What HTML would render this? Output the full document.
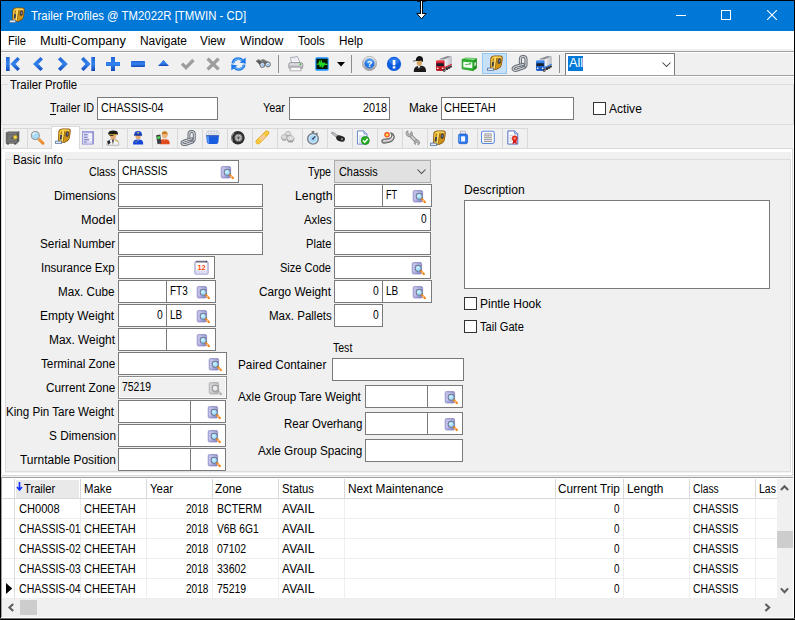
<!DOCTYPE html>
<html lang="en"><head><meta charset="utf-8"><title>Trailer Profiles @ TM2022R [TMWIN - CD]</title>
<style>
html,body{margin:0;padding:0;}
body{width:795px;height:620px;overflow:hidden;background:#f0f0f0;position:relative;font:12px/14px 'Liberation Sans', sans-serif;}
#w div,#w span,#w svg{position:absolute;}
#w span{white-space:pre;line-height:14px;transform-origin:0 0;}
#w{position:absolute;left:0;top:0;width:795px;height:620px;overflow:hidden;}
</style></head>
<body><div id="w">
<div style="left:0px;top:0px;width:795px;height:620px;background:#000;"></div>
<div style="left:1px;top:1px;width:793px;height:30px;background:#0078d7;"></div>
<div style="left:1px;top:31px;width:793px;height:18px;background:#fff;"></div>
<div style="left:1px;top:49px;width:793px;height:569px;background:#f0f0f0;"></div>
<div style="left:793px;top:49px;width:1px;height:428px;background:#f9f9f9;"></div>
<div style="left:1px;top:51px;width:793px;height:1px;background:#a0a0a0;"></div>
<div style="left:1px;top:52px;width:793px;height:1px;background:#fff;"></div>
<div style="left:1px;top:75px;width:793px;height:1px;background:#a0a0a0;"></div>
<div style="left:1px;top:76px;width:793px;height:1px;background:#fff;"></div>
<svg style="left:676px;top:10px" width="10" height="10" viewBox="0 0 10 10"><path d="M0 5.5H10" stroke="#fff" stroke-width="1" fill="none"/></svg>
<svg style="left:721px;top:10px" width="10" height="10" viewBox="0 0 10 10"><rect x=".5" y=".5" width="9" height="9" stroke="#fff" stroke-width="1" fill="none"/></svg>
<svg style="left:767px;top:10px" width="10" height="10" viewBox="0 0 10 10"><path d="M0 0L10 10M10 0L0 10" stroke="#fff" stroke-width="1.1" fill="none"/></svg>
<svg style="left:9px;top:7px" width="16" height="16" viewBox="0 0 16 16"><path d="M3.4 3.2Q4.4 0.4 7.4 0.4H13.4Q16 0.5 15.7 3.6L14.9 9.6Q14.4 12.2 12.4 13.2L9.6 14.7H5Q3 14.5 3.1 12.2Z" fill="#7e4e08"/><path d="M4.1 3.5Q4.9 1.1 7.6 1.1H13.2Q15.3 1.2 15.1 3.6L14.3 9.4Q13.9 11.6 12.1 12.6L9.4 14H5.2Q3.7 13.8 3.8 12Z" fill="#cf9418"/><path d="M4.3 3.9Q5.1 1.7 7.4 1.7H10.6Q9.2 2.4 8.9 5L7.9 13.4H5.2Q4.2 13.2 4.3 12Z" fill="#f3c83e"/><path d="M5 2.6Q5.8 1.7 7.4 1.7H13Q14.6 1.8 14.5 3.2Q12 2.4 5 2.6Z" fill="#f9de78"/><path d="M7.8 3.4L8.9 3.2L7.9 12.8L6.9 13Z" fill="#ffe680"/><path d="M9.2 3.4L9.8 3.3L8.8 13L8.2 13.2Z" fill="#8a5a10"/><path d="M5.3 6.8H7L6.5 11.4H4.8Z" fill="#2c3356"/><path d="M5.9 3.6H6.9L6.7 6H5.7Z" fill="#9a6a10"/><ellipse cx="12.3" cy="6.2" rx="1.5" ry="2.7" transform="rotate(8 12.3 6.2)" fill="#3c3e55" stroke="#6a5420" stroke-width=".6"/><ellipse cx="12.5" cy="6" rx=".6" ry="1.3" transform="rotate(8 12.5 6)" fill="#7a7e96"/><path d="M0.5 13.1H6.6V15.6H0.5Z" fill="#dfe8f4" stroke="#4e6c9c" stroke-width=".8"/></svg>
<svg style="left:416px;top:0px" width="11" height="20" viewBox="0 0 11 20"><rect x="1" y="0" width="9" height="1.7" fill="#000"/><rect x="4" y="0" width="3" height="14.5" fill="#000"/><path d="M0.8 13.4H10.2L5.5 18.8Z" fill="#fff" stroke="#000" stroke-width="1" stroke-linejoin="miter"/><rect x="5" y="1" width="1" height="14" fill="#fff"/></svg>
<svg style="left:0;top:0" width="0" height="0"><defs><linearGradient id="bg1" x1="0" y1="0" x2="0" y2="1"><stop offset="0" stop-color="#1f62d6"/><stop offset=".5" stop-color="#3484ee"/><stop offset="1" stop-color="#1248b8"/></linearGradient></defs></svg>
<svg style="left:6px;top:57px" width="14" height="14" viewBox="0 0 14 14"><rect x="0" y="0" width="3.7" height="14" fill="url(#bg1)"/><path d="M4.4 7L11.4 0L14 2.3L9.6 7L14 11.7L11.4 14Z" fill="url(#bg1)"/></svg>
<svg style="left:32px;top:57px" width="12" height="14" viewBox="0 0 12 14"><path d="M1 7L8.45 0L11 2.3L6.5 7L11 11.7L8.45 14Z" fill="url(#bg1)"/></svg>
<svg style="left:57px;top:57px" width="12" height="14" viewBox="0 0 12 14"><path d="M10.8 7L3.5 0L0.9 2.3L5.4 7L0.9 11.7L3.5 14Z" fill="url(#bg1)"/></svg>
<svg style="left:81px;top:57px" width="14" height="14" viewBox="0 0 14 14"><rect x="10.3" y="0" width="3.7" height="14" fill="url(#bg1)"/><path d="M9.6 7L2.6 0L0 2.3L4.4 7L0 11.7L2.6 14Z" fill="url(#bg1)"/></svg>
<svg style="left:106px;top:57px" width="14" height="14" viewBox="0 0 14 14"><path d="M5 0H9V5H14V9H9V14H5V9H0V5H5Z" fill="url(#bg1)"/></svg>
<svg style="left:131px;top:61px" width="14" height="6" viewBox="0 0 14 6"><rect x="0" y="0" width="14" height="6" rx=".8" fill="url(#bg1)"/></svg>
<svg style="left:157.7px;top:60px" width="12" height="6" viewBox="0 0 12 6"><path d="M0 6L5.5 0L11 6Z" fill="url(#bg1)"/></svg>
<svg style="left:180px;top:58px" width="16" height="12" viewBox="0 0 16 12"><path d="M2 5.6L6 9.6L13.4 2" stroke="#9d9d9d" stroke-width="3.3" fill="none"/></svg>
<svg style="left:206px;top:57px" width="15" height="14" viewBox="0 0 15 14"><path d="M1.6 1.6L12.6 12.4M12.6 1.6L1.6 12.4" stroke="#9d9d9d" stroke-width="3.4" fill="none"/></svg>
<svg style="left:231px;top:57px" width="15" height="14" viewBox="0 0 15 14"><path d="M1.8 6.4A5.6 5.6 0 0 1 11.4 3.4" stroke="#1f7ae8" stroke-width="2.8" fill="none"/><path d="M8.6 5.6L14.8 6.8L14.6 0.4Z" fill="#1f7ae8"/><path d="M13.2 7.6A5.6 5.6 0 0 1 3.6 10.6" stroke="#1f7ae8" stroke-width="2.8" fill="none"/><path d="M6.4 8.4L0.2 7.2L0.4 13.6Z" fill="#1f7ae8"/><path d="M2.4 5.8A5 5 0 0 1 11 3.6M12.6 8.2A5 5 0 0 1 4 10.4" stroke="#7cc0ff" stroke-width="1" fill="none"/></svg>
<svg style="left:255px;top:58px" width="16" height="11" viewBox="0 0 16 11"><path d="M0.8 3L3.4 1.2L8.6 4.6L6 8Z" fill="#5a5a5a"/><path d="M5.4 2.2L8.2 1L14.2 4.4L11.6 7.6Z" fill="#6c6c6c"/><path d="M2 2.6L4 1.6L8 4" stroke="#9a9a9a" stroke-width=".8" fill="none"/><path d="M6.6 2L8.4 1.4L13.4 4" stroke="#aaa" stroke-width=".8" fill="none"/><ellipse cx="7.4" cy="6.9" rx="2.5" ry="2.5" fill="#cfe4fa" stroke="#5a5a5a" stroke-width=".9"/><ellipse cx="13" cy="6.4" rx="2.4" ry="2.5" fill="#d8ebfc" stroke="#5a5a5a" stroke-width=".9"/><circle cx="7.6" cy="7.2" r="1" fill="#8ab8ea"/><circle cx="13.2" cy="6.7" r="1" fill="#8ab8ea"/></svg>
<div style="left:278px;top:55px;width:1px;height:18px;background:#8d8d8d;"></div>
<svg style="left:288px;top:56px" width="16" height="16" viewBox="0 0 16 16"><path d="M3.6 7L2.6 1.6L9.4 0.6L12 6.6Z" fill="#fff" stroke="#8a92a6" stroke-width=".8"/><path d="M4.4 2.8L8.6 2.2M4.8 4.4L9.6 3.8" stroke="#c8d0e0" stroke-width=".7"/><path d="M0.8 8.4Q0.8 6.6 2.6 6.6H12.8Q14.8 6.6 14.8 8.4V11.2Q14.8 12.8 13 12.8H2.6Q0.8 12.8 0.8 11.2Z" fill="#dcdce0" stroke="#86868c" stroke-width=".8"/><path d="M1.4 9.6H14.2V11.6Q14.2 12.4 13 12.4H2.6Q1.4 12.4 1.4 11.6Z" fill="#b4b4ba"/><path d="M2.8 11.2H12.2L13.4 14.8H1.8Z" fill="#f8f8f8" stroke="#9a9aa0" stroke-width=".7"/><circle cx="12.4" cy="8.2" r=".9" fill="#2cc02c"/></svg>
<svg style="left:315px;top:57px" width="14" height="14" viewBox="0 0 14 14"><rect x=".3" y=".3" width="13.4" height="13.4" rx="1.6" fill="#1e90ff"/><rect x="1.4" y="1.8" width="11.2" height="10.2" fill="#021a02"/><path d="M1.6 7.2H3.6L4.4 5L5.2 9.8L6.2 3.2L7.2 10.6L8 5.4L8.8 8.4L9.6 6.4L10.4 7.4H12.4" stroke="#2ae02a" stroke-width="1.1" fill="none"/></svg>
<svg style="left:337px;top:62px" width="8" height="5" viewBox="0 0 8 5"><path d="M0 0H8L4 4.5Z" fill="#000"/></svg>
<div style="left:351px;top:55px;width:1px;height:18px;background:#8d8d8d;"></div>
<svg style="left:362px;top:56px" width="15" height="15" viewBox="0 0 15 15"><defs><linearGradient id="hg" x1="0" y1="0" x2="0" y2="1"><stop offset="0" stop-color="#f2f2f2"/><stop offset="1" stop-color="#9c9ca0"/></linearGradient></defs><circle cx="7.5" cy="7.5" r="7.1" fill="url(#hg)" stroke="#8e9096" stroke-width=".6"/><circle cx="7.5" cy="7.5" r="5" fill="#2576e2"/><ellipse cx="7.5" cy="5.4" rx="3.8" ry="2.4" fill="#62a8f6" opacity=".75"/><text x="7.5" y="10.6" font-family="Liberation Sans, sans-serif" font-weight="bold" font-size="8.5" text-anchor="middle" fill="#fff">?</text></svg>
<svg style="left:386px;top:56px" width="16" height="16" viewBox="0 0 16 16"><circle cx="8" cy="7.9" r="7.1" fill="#0c5ce0"/><ellipse cx="8" cy="5" rx="5.4" ry="3.3" fill="#3a86f0" opacity=".7"/><rect x="6.7" y="4" width="2.7" height="5.3" rx=".6" fill="#fff"/><rect x="6.7" y="10.3" width="2.7" height="2.2" rx=".5" fill="#fff"/></svg>
<svg style="left:412px;top:55px" width="16" height="17" viewBox="0 0 16 17"><path d="M1.8 17Q1.4 12.4 5 11.2L7.6 10.4L10.8 11Q14.4 12.2 14 17Z" fill="#1a1a1a"/><path d="M5.2 13Q7 11.6 10 12.4" stroke="#555" stroke-width=".7" fill="none"/><path d="M5.6 10.8L7 13.8L8.4 10.6Z" fill="#ececec"/><ellipse cx="7.3" cy="7.8" rx="2.6" ry="3" fill="#d6a564"/><path d="M3.8 5.6Q4 1 7.8 1Q11.6 1.2 11 6.4L10 7L9.6 5.8L4.2 5.9L1.3 6.6L1 5.7Z" fill="#141414"/></svg>
<svg style="left:435px;top:55px" width="17" height="17" viewBox="0 0 17 17"><defs><linearGradient id="tgdc222c" x1="0" y1="0" x2="1" y2="0"><stop offset="0" stop-color="#f4f4f8"/><stop offset="1" stop-color="#b8bac2"/></linearGradient></defs><path d="M4.6 3.8L12.4 1L16.8 1.4L9.8 4.6Z" fill="#8d9098"/><path d="M4.6 3.8L9.8 4.6V6.2L4.6 5.6Z" fill="#b9bdc6"/><path d="M9.8 4.6L16.8 1.4V9.9L9.8 13Z" fill="url(#tgdc222c)"/><path d="M9.8 11.8L16.8 8.7V9.9L9.8 13Z" fill="#dc222c"/><circle cx="11.8" cy="13.6" r="1.5" fill="#2c2c2c"/><circle cx="14" cy="12.6" r="1.3" fill="#2c2c2c"/><circle cx="15.9" cy="11.6" r="1.1" fill="#2c2c2c"/><path d="M1 7Q1 5.4 2.4 5.2H8.2L9.6 6.4V14.6L8.6 15.8H2L1 14.8Z" fill="#dc222c"/><path d="M1.8 5.8H8.2" stroke="#f4767c" stroke-width="1"/><path d="M1.5 8.2H8.7L8.9 10.9H1.3Z" fill="#18202e"/><path d="M1 11.4H9.6V14.6L8.6 15.8H2L1 14.8Z" fill="#b8141e"/><ellipse cx="2.7" cy="13.2" rx="1" ry=".8" fill="#fff"/><ellipse cx="7.7" cy="13.2" rx="1" ry=".8" fill="#fff"/><circle cx="9.2" cy="15.4" r="1.4" fill="#2c2c2c"/><circle cx="9.2" cy="15.4" r=".6" fill="#aaa"/></svg>
<svg style="left:460.6px;top:57px" width="16.8" height="14.6" viewBox="0 0 18 16"><path d="M1 2.8L5 1L17.2 1.8L13.4 3.8Z" fill="#92ea92" stroke="#1e961e" stroke-width=".6"/><path d="M13.4 3.8L17.2 1.8V12.4L13.4 15Z" fill="#1e8e1e"/><path d="M1 2.8L13.4 3.8V15L1 13Z" fill="#2eb42e" stroke="#168a16" stroke-width=".7"/><path d="M2.3 5.2L12.2 6V12.4L2.3 11.2Z" fill="#f2faf2"/><path d="M4.4 8.4L10.8 7.6M10.8 7.6L8.6 6.8" stroke="#3aa83a" stroke-width=".9" fill="none"/><path d="M14.4 6.4L16.2 5.4V9L14.4 10.2Z" fill="#d6eed6"/></svg>
<div style="left:482px;top:53px;width:25px;height:21px;background:#c6e0f7;border:1px solid #92c8f5;box-sizing:border-box;"></div>
<svg style="left:486.5px;top:55.2px" width="16" height="16" viewBox="0 0 16 16"><path d="M3.4 3.2Q4.4 0.4 7.4 0.4H13.4Q16 0.5 15.7 3.6L14.9 9.6Q14.4 12.2 12.4 13.2L9.6 14.7H5Q3 14.5 3.1 12.2Z" fill="#7e4e08"/><path d="M4.1 3.5Q4.9 1.1 7.6 1.1H13.2Q15.3 1.2 15.1 3.6L14.3 9.4Q13.9 11.6 12.1 12.6L9.4 14H5.2Q3.7 13.8 3.8 12Z" fill="#cf9418"/><path d="M4.3 3.9Q5.1 1.7 7.4 1.7H10.6Q9.2 2.4 8.9 5L7.9 13.4H5.2Q4.2 13.2 4.3 12Z" fill="#f3c83e"/><path d="M5 2.6Q5.8 1.7 7.4 1.7H13Q14.6 1.8 14.5 3.2Q12 2.4 5 2.6Z" fill="#f9de78"/><path d="M7.8 3.4L8.9 3.2L7.9 12.8L6.9 13Z" fill="#ffe680"/><path d="M9.2 3.4L9.8 3.3L8.8 13L8.2 13.2Z" fill="#8a5a10"/><path d="M5.3 6.8H7L6.5 11.4H4.8Z" fill="#2c3356"/><path d="M5.9 3.6H6.9L6.7 6H5.7Z" fill="#9a6a10"/><ellipse cx="12.3" cy="6.2" rx="1.5" ry="2.7" transform="rotate(8 12.3 6.2)" fill="#3c3e55" stroke="#6a5420" stroke-width=".6"/><ellipse cx="12.5" cy="6" rx=".6" ry="1.3" transform="rotate(8 12.5 6)" fill="#7a7e96"/><path d="M0.5 13.1H6.6V15.6H0.5Z" fill="#dfe8f4" stroke="#4e6c9c" stroke-width=".8"/></svg>
<svg style="left:511px;top:55px" width="17" height="17" viewBox="0 0 17 17"><path d="M9.4 10V4.4Q9.4 1.5 12.2 1.5Q15 1.5 15 4.4V9.4Q15 11.8 12.6 12.2" stroke="#666d76" stroke-width="3.1" fill="none" stroke-linecap="round"/><path d="M9.4 10V4.4Q9.4 1.5 12.2 1.5Q15 1.5 15 4.4V9.4Q15 11.8 12.6 12.2" stroke="#d4d9de" stroke-width="1.1" fill="none" stroke-linecap="round"/><path d="M12.4 9.3L5.2 11.2Q1.6 12.4 2.2 14.2Q3 16 6.4 15L13.2 12.6" stroke="#666d76" stroke-width="3.1" fill="none" stroke-linecap="round"/><path d="M12.4 9.3L5.2 11.2Q1.6 12.4 2.2 14.2Q3 16 6.4 15L13.2 12.6" stroke="#d4d9de" stroke-width="1.1" fill="none" stroke-linecap="round"/></svg>
<svg style="left:535px;top:55px" width="17" height="17" viewBox="0 0 17 17"><defs><linearGradient id="tg2a7ae4" x1="0" y1="0" x2="1" y2="0"><stop offset="0" stop-color="#f4f4f8"/><stop offset="1" stop-color="#b8bac2"/></linearGradient></defs><path d="M4.6 3.8L12.4 1L16.8 1.4L9.8 4.6Z" fill="#8d9098"/><path d="M4.6 3.8L9.8 4.6V6.2L4.6 5.6Z" fill="#b9bdc6"/><path d="M9.8 4.6L16.8 1.4V9.9L9.8 13Z" fill="url(#tg2a7ae4)"/><path d="M9.8 11.8L16.8 8.7V9.9L9.8 13Z" fill="#2a7ae4"/><circle cx="11.8" cy="13.6" r="1.5" fill="#2c2c2c"/><circle cx="14" cy="12.6" r="1.3" fill="#2c2c2c"/><circle cx="15.9" cy="11.6" r="1.1" fill="#2c2c2c"/><path d="M1 7Q1 5.4 2.4 5.2H8.2L9.6 6.4V14.6L8.6 15.8H2L1 14.8Z" fill="#2a7ae4"/><path d="M1.8 5.8H8.2" stroke="#7ab4f8" stroke-width="1"/><path d="M1.5 8.2H8.7L8.9 10.9H1.3Z" fill="#18202e"/><path d="M1 11.4H9.6V14.6L8.6 15.8H2L1 14.8Z" fill="#1858c0"/><ellipse cx="2.7" cy="13.2" rx="1" ry=".8" fill="#fff"/><ellipse cx="7.7" cy="13.2" rx="1" ry=".8" fill="#fff"/><circle cx="9.2" cy="15.4" r="1.4" fill="#2c2c2c"/><circle cx="9.2" cy="15.4" r=".6" fill="#aaa"/></svg>
<div style="left:559px;top:55px;width:1px;height:18px;background:#8d8d8d;"></div>
<div style="left:565px;top:53px;width:110px;height:22px;background:#fff;border:1px solid #7a7a7a;box-sizing:border-box;border-bottom:none;"></div>
<div style="left:568px;top:56px;width:15px;height:15px;background:#0078d7;"></div>
<svg style="left:662px;top:62px" width="9" height="6" viewBox="0 0 9 6"><path d="M0.5 0.5L4.5 4.5L8.5 0.5" stroke="#444" stroke-width="1.05" fill="none"/></svg>
<div style="left:1px;top:84px;width:793px;height:41px;border:1px solid #dcdcdc;box-sizing:border-box;"></div>
<div style="left:8px;top:80px;width:72px;height:10px;background:#f0f0f0;"></div>
<div style="left:49.5px;top:113.5px;width:6px;height:1px;background:#000;"></div>
<div style="left:97px;top:97px;width:121px;height:23px;background:#fff;border:1px solid #7a7a7a;box-sizing:border-box;"></div>
<div style="left:289px;top:97px;width:101px;height:23px;background:#fff;border:1px solid #7a7a7a;box-sizing:border-box;"></div>
<div style="left:441px;top:97px;width:133px;height:23px;background:#fff;border:1px solid #7a7a7a;box-sizing:border-box;"></div>
<div style="left:593px;top:102px;width:13px;height:13px;background:#fff;border:1px solid #333;box-sizing:border-box;"></div>
<div style="left:3px;top:128px;width:25px;height:21px;background:#f0f0f0;border:1px solid #d9d9d9;box-sizing:border-box;border-bottom:none;"></div>
<div style="left:27px;top:128px;width:26px;height:21px;background:#f0f0f0;border:1px solid #d9d9d9;box-sizing:border-box;border-bottom:none;"></div>
<div style="left:77px;top:128px;width:26px;height:21px;background:#f0f0f0;border:1px solid #d9d9d9;box-sizing:border-box;border-bottom:none;"></div>
<div style="left:102px;top:128px;width:26px;height:21px;background:#f0f0f0;border:1px solid #d9d9d9;box-sizing:border-box;border-bottom:none;"></div>
<div style="left:127px;top:128px;width:26px;height:21px;background:#f0f0f0;border:1px solid #d9d9d9;box-sizing:border-box;border-bottom:none;"></div>
<div style="left:152px;top:128px;width:26px;height:21px;background:#f0f0f0;border:1px solid #d9d9d9;box-sizing:border-box;border-bottom:none;"></div>
<div style="left:177px;top:128px;width:26px;height:21px;background:#f0f0f0;border:1px solid #d9d9d9;box-sizing:border-box;border-bottom:none;"></div>
<div style="left:202px;top:128px;width:26px;height:21px;background:#f0f0f0;border:1px solid #d9d9d9;box-sizing:border-box;border-bottom:none;"></div>
<div style="left:227px;top:128px;width:26px;height:21px;background:#f0f0f0;border:1px solid #d9d9d9;box-sizing:border-box;border-bottom:none;"></div>
<div style="left:252px;top:128px;width:26px;height:21px;background:#f0f0f0;border:1px solid #d9d9d9;box-sizing:border-box;border-bottom:none;"></div>
<div style="left:277px;top:128px;width:26px;height:21px;background:#f0f0f0;border:1px solid #d9d9d9;box-sizing:border-box;border-bottom:none;"></div>
<div style="left:302px;top:128px;width:26px;height:21px;background:#f0f0f0;border:1px solid #d9d9d9;box-sizing:border-box;border-bottom:none;"></div>
<div style="left:327px;top:128px;width:26px;height:21px;background:#f0f0f0;border:1px solid #d9d9d9;box-sizing:border-box;border-bottom:none;"></div>
<div style="left:352px;top:128px;width:26px;height:21px;background:#f0f0f0;border:1px solid #d9d9d9;box-sizing:border-box;border-bottom:none;"></div>
<div style="left:377px;top:128px;width:26px;height:21px;background:#f0f0f0;border:1px solid #d9d9d9;box-sizing:border-box;border-bottom:none;"></div>
<div style="left:402px;top:128px;width:26px;height:21px;background:#f0f0f0;border:1px solid #d9d9d9;box-sizing:border-box;border-bottom:none;"></div>
<div style="left:427px;top:128px;width:26px;height:21px;background:#f0f0f0;border:1px solid #d9d9d9;box-sizing:border-box;border-bottom:none;"></div>
<div style="left:452px;top:128px;width:26px;height:21px;background:#f0f0f0;border:1px solid #d9d9d9;box-sizing:border-box;border-bottom:none;"></div>
<div style="left:477px;top:128px;width:26px;height:21px;background:#f0f0f0;border:1px solid #d9d9d9;box-sizing:border-box;border-bottom:none;"></div>
<div style="left:502px;top:128px;width:26px;height:21px;background:#f0f0f0;border:1px solid #d9d9d9;box-sizing:border-box;border-bottom:none;"></div>
<div style="left:1px;top:148px;width:792px;height:328px;background:#fff;border:1px solid #d9d9d9;box-sizing:border-box;"></div>
<div style="left:51px;top:126px;width:29px;height:23px;background:#fff;border:1px solid #d9d9d9;box-sizing:border-box;border-bottom:none;"></div>
<svg style="left:5.3px;top:130px" width="16.2" height="16.2" viewBox="0 0 17 17"><path d="M1.2 3L3.8 1H15V11.8L12.6 13.8H1.2Z" fill="#5e5e5e"/><path d="M1.2 3L3.8 1H15L12.6 3Z" fill="#a8a8a8"/><rect x="1.2" y="3" width="11.4" height="10.8" fill="#868686" stroke="#4a4a4a" stroke-width=".7"/><rect x="2.8" y="4.6" width="8.2" height="7.6" fill="#767676" stroke="#5c5c5c" stroke-width=".6"/><circle cx="10.8" cy="7.6" r="2" fill="#f4d648" stroke="#a88a14" stroke-width=".6"/><circle cx="7.6" cy="8.6" r=".9" fill="#4a4a4a"/><path d="M2 13.8V15.2H4.2V13.8M9.6 13.8V15.2H11.8V13.8" fill="#3a3a3a"/></svg>
<svg style="left:30.3px;top:130px" width="16.2" height="16.2" viewBox="0 0 17 17"><path d="M8.8 9.2L13.6 14" stroke="#e8801a" stroke-width="3" stroke-linecap="round"/><path d="M10.2 10.6L13.4 13.8" stroke="#fde0b8" stroke-width="1" stroke-dasharray="1 1"/><path d="M8 8.4L9.4 9.8" stroke="#ddd" stroke-width="2.2"/><circle cx="5.6" cy="5.8" r="4.2" fill="#a9dcf8" stroke="#9a9490" stroke-width="1.1"/><path d="M3 5Q3.8 3 6 2.8" stroke="#fff" stroke-width="1.1" fill="none"/></svg>
<svg style="left:54.5px;top:127.5px" width="16" height="16" viewBox="0 0 16 16"><path d="M3.4 3.2Q4.4 0.4 7.4 0.4H13.4Q16 0.5 15.7 3.6L14.9 9.6Q14.4 12.2 12.4 13.2L9.6 14.7H5Q3 14.5 3.1 12.2Z" fill="#7e4e08"/><path d="M4.1 3.5Q4.9 1.1 7.6 1.1H13.2Q15.3 1.2 15.1 3.6L14.3 9.4Q13.9 11.6 12.1 12.6L9.4 14H5.2Q3.7 13.8 3.8 12Z" fill="#cf9418"/><path d="M4.3 3.9Q5.1 1.7 7.4 1.7H10.6Q9.2 2.4 8.9 5L7.9 13.4H5.2Q4.2 13.2 4.3 12Z" fill="#f3c83e"/><path d="M5 2.6Q5.8 1.7 7.4 1.7H13Q14.6 1.8 14.5 3.2Q12 2.4 5 2.6Z" fill="#f9de78"/><path d="M7.8 3.4L8.9 3.2L7.9 12.8L6.9 13Z" fill="#ffe680"/><path d="M9.2 3.4L9.8 3.3L8.8 13L8.2 13.2Z" fill="#8a5a10"/><path d="M5.3 6.8H7L6.5 11.4H4.8Z" fill="#2c3356"/><path d="M5.9 3.6H6.9L6.7 6H5.7Z" fill="#9a6a10"/><ellipse cx="12.3" cy="6.2" rx="1.5" ry="2.7" transform="rotate(8 12.3 6.2)" fill="#3c3e55" stroke="#6a5420" stroke-width=".6"/><ellipse cx="12.5" cy="6" rx=".6" ry="1.3" transform="rotate(8 12.5 6)" fill="#7a7e96"/><path d="M0.5 13.1H6.6V15.6H0.5Z" fill="#dfe8f4" stroke="#4e6c9c" stroke-width=".8"/></svg>
<svg style="left:80.3px;top:130px" width="16.2" height="16.2" viewBox="0 0 17 17"><rect x="2.6" y="1.6" width="11.4" height="13.2" fill="#dcdcf6" stroke="#8e8ed4" stroke-width=".9"/><path d="M2.6 2.4H14" stroke="#a8a8e0" stroke-width="1.4"/><path d="M4.2 5H8M4.2 7.6H8M4.2 10.2H9.4M4.2 12.6H7" stroke="#6c6cb0" stroke-width="1"/><path d="M9 5H12.6M9 7.6H12.6M10.2 10.2H12.6" stroke="#fff" stroke-width="1.4"/><path d="M13.6 2V14.6" stroke="#7a7ac4" stroke-width=".9"/></svg>
<svg style="left:105.3px;top:130px" width="16.2" height="16.2" viewBox="0 0 17 17"><path d="M2 16Q1.6 11 5 10.2L8.4 9.4L11.8 10.2Q15 11 14.6 16Z" fill="#f4f4f4" stroke="#8e8e8e" stroke-width=".6"/><path d="M7.4 10L8.3 15.4L9.4 10Z" fill="#222"/><path d="M2.2 12.2L4.6 10.6L6 13.4L3.4 15.6Z" fill="#2a2a2a"/><path d="M11 10.4L13.8 11.2L13.4 12.4L10.8 11.6Z" fill="#d8a820"/><ellipse cx="8.5" cy="6.6" rx="3" ry="3.3" fill="#e0aa72"/><path d="M3.4 3.6Q3.6 0.4 8.6 0.4Q13.6 0.4 13.6 3.6L13 5.2H4Z" fill="#1c1c1c"/><path d="M4.4 4.4H12.6V5.4H4.4Z" fill="#d8b030"/><path d="M4.4 5.4H9L8.4 6.4H5Z" fill="#111"/></svg>
<svg style="left:130.3px;top:130px" width="16.2" height="16.2" viewBox="0 0 17 17"><path d="M3.2 15.2Q2.8 11 6 10.2L8.5 9.6L11 10.2Q14.2 11 13.8 15.2Z" fill="#1646d8"/><path d="M7.5 9.8L8.5 12L9.5 9.8Z" fill="#9cc0f4"/><circle cx="6.4" cy="12.4" r=".6" fill="#f0d040"/><ellipse cx="8.5" cy="6.9" rx="2.7" ry="3" fill="#e0aa72"/><path d="M4.6 4.2Q4.6 1 8.5 1Q12.4 1 12.4 4.2L13 5.6H4Z" fill="#1a48d0"/><path d="M4.4 4.8H12.6V5.9H4.4Z" fill="#0c2a80"/><circle cx="8.5" cy="3" r=".9" fill="#f0d040"/></svg>
<svg style="left:155.3px;top:130px" width="16.2" height="16.2" viewBox="0 0 17 17"><path d="M4.6 15Q4.2 10.8 7.4 10L10 9.4L12.6 10Q15.8 10.8 15.4 15Z" fill="#e04a1c"/><path d="M9 9.8L10 11.4L11.2 9.8Z" fill="#f4c8a0"/><ellipse cx="10.2" cy="5.6" rx="2.9" ry="3.3" fill="#ecb67e"/><path d="M7.2 4.8Q7.2 1.2 10.4 1.4Q13.6 1.6 13.2 5.4Q12 3 7.2 4.8Z" fill="#c87a1c"/><path d="M1.2 5.6L5.6 4.6L6.6 14L2.6 15Z" fill="#3e3e46"/><path d="M2.2 7L5 6.4L5.3 9L2.5 9.6Z" fill="#4ee04e"/></svg>
<svg style="left:180.3px;top:130px" width="16.2" height="16.2" viewBox="0 0 17 17"><path d="M9.4 10V4.4Q9.4 1.5 12.2 1.5Q15 1.5 15 4.4V9.4Q15 11.8 12.6 12.2" stroke="#666d76" stroke-width="3.1" fill="none" stroke-linecap="round"/><path d="M9.4 10V4.4Q9.4 1.5 12.2 1.5Q15 1.5 15 4.4V9.4Q15 11.8 12.6 12.2" stroke="#d4d9de" stroke-width="1.1" fill="none" stroke-linecap="round"/><path d="M12.4 9.3L5.2 11.2Q1.6 12.4 2.2 14.2Q3 16 6.4 15L13.2 12.6" stroke="#666d76" stroke-width="3.1" fill="none" stroke-linecap="round"/><path d="M12.4 9.3L5.2 11.2Q1.6 12.4 2.2 14.2Q3 16 6.4 15L13.2 12.6" stroke="#d4d9de" stroke-width="1.1" fill="none" stroke-linecap="round"/></svg>
<svg style="left:205.3px;top:130px" width="16.2" height="16.2" viewBox="0 0 17 17"><path d="M1.3 5.6H14.7L14 12.6Q13.8 14.6 11.8 14.8H4.4Q2.4 14.6 2 12.6Z" fill="#1a5ce0"/><path d="M2 6.4L2.6 12.4Q2.8 14 4.4 14.2L4 6.4Z" fill="#5a9af4"/><path d="M1.4 3.6L3 1.2H13L14.6 3.6V6H1.4Z" fill="#f4f6fa" stroke="#a8b0c0" stroke-width=".6"/><path d="M3.4 1.4V4.2H6.4V1.4M6.4 4.2H9.6V1.4M9.6 4.2H12.6V1.4" stroke="#b4bccc" stroke-width=".7" fill="none"/><path d="M1.4 6H14.6" stroke="#0e3eb0" stroke-width=".9"/></svg>
<svg style="left:230.3px;top:130px" width="16.2" height="16.2" viewBox="0 0 17 17"><circle cx="8.3" cy="8.2" r="7.1" fill="#2c2c2c"/><path d="M2.6 11.4A6.4 6.4 0 0 1 4.4 3.2" stroke="#8a8a8a" stroke-width="1.3" fill="none"/><circle cx="8.9" cy="8.2" r="4.2" fill="#7a7a7a"/><circle cx="8.9" cy="8.2" r="3.3" fill="#d0d0d0"/><path d="M8.9 5V11.4M5.7 8.2H12.1M6.7 6L11.1 10.4M11.1 6L6.7 10.4" stroke="#6a6a6a" stroke-width=".7"/><circle cx="8.9" cy="8.2" r="1" fill="#555"/></svg>
<svg style="left:255.3px;top:130px" width="16.2" height="16.2" viewBox="0 0 17 17"><path d="M3.2 12.4L12.4 3.2" stroke="#e0a018" stroke-width="5" stroke-linecap="round"/><path d="M3.2 12.4L12.4 3.2" stroke="#fad24a" stroke-width="3.6" stroke-linecap="round"/><path d="M5.8 9.8L9.8 5.8" stroke="#f8c8a0" stroke-width="3.6"/><path d="M3.2 12.4L5 10.6M10.6 5L12.4 3.2" stroke="#f0b428" stroke-width="2.6" stroke-dasharray=".6 .7"/></svg>
<svg style="left:280.3px;top:130px" width="16.2" height="16.2" viewBox="0 0 17 17"><path d="M5.4 3.6L7 1.6H10L11.4 3.6L10 5.8H7Z" fill="#dcdcdc" stroke="#9a9a9a" stroke-width=".6"/><path d="M5.4 3.6V5L7 7H10L11.4 5V3.6L10 5.8H7Z" fill="#a4a4a4"/><path d="M1.2 7.4L2.8 5H6L7.6 7.4L6 9.8H2.8Z" fill="#e0e0e0" stroke="#9a9a9a" stroke-width=".6"/><path d="M1.2 7.4V9L2.8 11.4H6L7.6 9V7.4L6 9.8H2.8Z" fill="#a8a8a8"/><circle cx="4.4" cy="7.4" r="1.1" fill="#f6f6f6" stroke="#aaa" stroke-width=".4"/><path d="M7 8.6L9 6H13L15 8.6L13 11.2H9Z" fill="#e2e2e2" stroke="#9a9a9a" stroke-width=".6"/><path d="M7 8.6V10.4L9 13H13L15 10.4V8.6L13 11.2H9Z" fill="#a0a0a0"/><circle cx="11" cy="8.6" r="1.3" fill="#f8f8f8" stroke="#aaa" stroke-width=".4"/></svg>
<svg style="left:305.3px;top:130px" width="16.2" height="16.2" viewBox="0 0 17 17"><rect x="7" y="1" width="2.8" height="2.4" fill="#7a7a7a"/><path d="M11.8 3.2L13.2 4.4" stroke="#666" stroke-width="1.5"/><circle cx="8.4" cy="9.2" r="5.6" fill="#a6d4f6" stroke="#7c8088" stroke-width="1.5"/><circle cx="8.4" cy="9.2" r="4.2" fill="none" stroke="#d8eefc" stroke-width=".8"/><path d="M8.4 9.2L10.8 6.6" stroke="#223" stroke-width="1.1"/><circle cx="8.4" cy="9.2" r=".9" fill="#223"/></svg>
<svg style="left:330.3px;top:130px" width="16.2" height="16.2" viewBox="0 0 17 17"><path d="M1.2 3.2L3 2.2L9 6.4L7.4 8.2Z" fill="#c4c8cc" stroke="#70757a" stroke-width=".7"/><path d="M6.4 7.6Q7.2 5 10 5.6L14.4 7Q16.4 8 15.6 10.4Q14.8 12.8 12 12.4L8.4 11.4Q6 10.4 6.4 7.6Z" fill="#262626"/><circle cx="12.6" cy="9.6" r="1.1" fill="#888"/></svg>
<svg style="left:355.3px;top:130px" width="16.2" height="16.2" viewBox="0 0 17 17"><path d="M2.6 1H9.4L12.6 4.2V14.8H2.6Z" fill="#fff" stroke="#5a78c0" stroke-width=".9"/><path d="M9.4 1V4.2H12.6" fill="#d8e2f6" stroke="#5a78c0" stroke-width=".8"/><path d="M4.2 6.4H10M4.2 8.6H7M4.2 10.8H6M4.2 13H6.4" stroke="#a8b8dc" stroke-width=".9"/><circle cx="10.8" cy="11" r="4.2" fill="#22b222" stroke="#0e7a0e" stroke-width=".7"/><path d="M8.4 11L10.2 12.8L13.4 9.2" stroke="#fff" stroke-width="1.5" fill="none"/></svg>
<svg style="left:380.3px;top:130px" width="16.2" height="16.2" viewBox="0 0 17 17"><path d="M1.8 11.8Q1.6 9.8 4 9.6L8.6 9.2Q11.8 8.8 12.4 6.4Q12.8 4 11 2.8Q14.8 3.2 15 7Q15 11.4 10.2 12.8L4.4 14Q2 14.2 1.8 11.8Z" fill="#a2a2a2" stroke="#4e4e4e" stroke-width=".9"/><path d="M3.4 11.4Q7.6 11.6 10.6 10.4Q13.4 9 13.6 6.4" stroke="#e8e8e8" stroke-width="1.1" fill="none"/><circle cx="7.4" cy="5" r="2.9" fill="#f04a1e"/><circle cx="7.4" cy="5" r="1.7" fill="#ffc23a"/><circle cx="7.4" cy="5" r=".8" fill="#fff27a"/></svg>
<svg style="left:405.3px;top:130px" width="16.2" height="16.2" viewBox="0 0 17 17"><path d="M4.6 4.6L12.2 12.2" stroke="#8e8e8e" stroke-width="3.8"/><path d="M4.6 4.6L12.2 12.2" stroke="#d2d2d2" stroke-width="2"/><path d="M1 3.6Q0.8 1.2 3.2 0.8L3 3L4.6 4.4L6.6 3.6L6.2 1.4Q8.4 2.2 7.8 4.8Q7 7.2 4.2 7Q1.4 6.6 1 3.6Z" fill="#b4b4b4" stroke="#767676" stroke-width=".6"/><path d="M9.8 12.4Q10.2 10 12.6 10.2Q15.2 10.6 15.4 13.2Q15.4 15.2 13.6 15.8L13.8 13.8L12.4 12.8L10.8 13.6L11 15.4Q9.4 14.6 9.8 12.4Z" fill="#b4b4b4" stroke="#767676" stroke-width=".6"/></svg>
<svg style="left:430px;top:130px" width="16" height="16" viewBox="0 0 16 16"><path d="M3.4 3.2Q4.4 0.4 7.4 0.4H13.4Q16 0.5 15.7 3.6L14.9 9.6Q14.4 12.2 12.4 13.2L9.6 14.7H5Q3 14.5 3.1 12.2Z" fill="#7e4e08"/><path d="M4.1 3.5Q4.9 1.1 7.6 1.1H13.2Q15.3 1.2 15.1 3.6L14.3 9.4Q13.9 11.6 12.1 12.6L9.4 14H5.2Q3.7 13.8 3.8 12Z" fill="#cf9418"/><path d="M4.3 3.9Q5.1 1.7 7.4 1.7H10.6Q9.2 2.4 8.9 5L7.9 13.4H5.2Q4.2 13.2 4.3 12Z" fill="#f3c83e"/><path d="M5 2.6Q5.8 1.7 7.4 1.7H13Q14.6 1.8 14.5 3.2Q12 2.4 5 2.6Z" fill="#f9de78"/><path d="M7.8 3.4L8.9 3.2L7.9 12.8L6.9 13Z" fill="#ffe680"/><path d="M9.2 3.4L9.8 3.3L8.8 13L8.2 13.2Z" fill="#8a5a10"/><path d="M5.3 6.8H7L6.5 11.4H4.8Z" fill="#2c3356"/><path d="M5.9 3.6H6.9L6.7 6H5.7Z" fill="#9a6a10"/><ellipse cx="12.3" cy="6.2" rx="1.5" ry="2.7" transform="rotate(8 12.3 6.2)" fill="#3c3e55" stroke="#6a5420" stroke-width=".6"/><ellipse cx="12.5" cy="6" rx=".6" ry="1.3" transform="rotate(8 12.5 6)" fill="#7a7e96"/><path d="M0.5 13.1H6.6V15.6H0.5Z" fill="#dfe8f4" stroke="#4e6c9c" stroke-width=".8"/></svg>
<svg style="left:455.3px;top:130px" width="16.2" height="16.2" viewBox="0 0 17 17"><rect x="6" y="1.2" width="4.8" height="3.2" fill="#ececf2" stroke="#9a9eb0" stroke-width=".6"/><path d="M3.6 6Q3.6 4.2 5.4 4.2H11.4Q13.2 4.2 13.2 6V12.4Q13.2 14.4 11.4 14.4H5.4Q3.6 14.4 3.6 12.4Z" fill="#2a78ee" stroke="#1650c0" stroke-width=".7"/><path d="M4.4 5.8V12.6" stroke="#7ab8fa" stroke-width="1"/><rect x="6.4" y="6.6" width="4.2" height="5.6" rx=".5" fill="#f4f6ff"/></svg>
<svg style="left:480.3px;top:130px" width="16.2" height="16.2" viewBox="0 0 17 17"><rect x="1.6" y="1.4" width="13.4" height="12.8" rx="2" fill="#fff" stroke="#5a88e0" stroke-width="1.1"/><path d="M4 4.2H12.6M4 6.2H12.6M4 8.2H12.6M4 10.2H12.6M4 12.2H12.6" stroke="#666" stroke-width=".8"/></svg>
<svg style="left:505.3px;top:130px" width="16.2" height="16.2" viewBox="0 0 17 17"><path d="M3 1H10.2L13.4 4.2V14.8H3Z" fill="#fff" stroke="#4a68b8" stroke-width="1"/><path d="M10.2 1V4.2H13.4" fill="#d0dcf4" stroke="#4a68b8" stroke-width=".8"/><path d="M4.6 5.6H8.4M4.6 7.6H7M4.6 9.6H7M4.6 11.6H7.4" stroke="#b4b8c4" stroke-width=".8"/><path d="M8.6 10.6L7.8 15L10.2 13.6L12.6 15L11.8 10.6Z" fill="#d81818"/><circle cx="10.2" cy="8.8" r="2.7" fill="#f03020" stroke="#b01010" stroke-width=".6"/><circle cx="10.2" cy="8.8" r="1.1" fill="#ff9a7a"/></svg>
<div style="left:5px;top:152px;width:786px;height:321px;background:#f0f0f0;"></div>
<div style="left:5px;top:159px;width:786px;height:313px;border:1px solid #dcdcdc;box-sizing:border-box;"></div>
<div style="left:12px;top:154px;width:53px;height:12px;background:#f0f0f0;"></div>
<div style="left:118px;top:160px;width:121px;height:23px;background:#fff;border:1px solid #7a7a7a;box-sizing:border-box;"></div>
<svg style="left:220px;top:166px" width="14" height="14" viewBox="0 0 14 14"><defs><linearGradient id="lka" x1="0" y1="0" x2="1" y2="0"><stop offset="0" stop-color="#bcbcec"/><stop offset="1" stop-color="#8282c0"/></linearGradient></defs><rect x="1.2" y=".4" width="9.4" height="11.6" rx="1.5" fill="url(#lka)" stroke="#8080bc" stroke-width=".7"/><path d="M2 2.2H10M2 4.4H4.4M2 6.6H4M2 8.8H4.4" stroke="#e2e2f6" stroke-width=".8" opacity=".8"/><path d="M9.6 8.8L12.8 12" stroke="#f28a1c" stroke-width="2.3" stroke-linecap="round"/><path d="M11 10.2L11.8 11" stroke="#fff" stroke-width="2" opacity=".55"/><circle cx="7.2" cy="6.3" r="3.1" fill="#a6e0fc" stroke="#6a7088" stroke-width="1"/><circle cx="6.6" cy="5.6" r="1.2" fill="#fff" opacity=".5"/></svg>
<div style="left:118px;top:184px;width:145px;height:23px;background:#fff;border:1px solid #7a7a7a;box-sizing:border-box;"></div>
<div style="left:118px;top:208px;width:145px;height:23px;background:#fff;border:1px solid #7a7a7a;box-sizing:border-box;"></div>
<div style="left:118px;top:232px;width:145px;height:23px;background:#fff;border:1px solid #7a7a7a;box-sizing:border-box;"></div>
<div style="left:118px;top:256px;width:97px;height:23px;background:#fff;border:1px solid #7a7a7a;box-sizing:border-box;"></div>
<svg style="left:194px;top:260px" width="15" height="15" viewBox="0 0 15 15"><rect x="1" y="1.6" width="13" height="12.4" rx=".6" fill="#fff" stroke="#8484c8" stroke-width="1"/><rect x="1.6" y="10.4" width="11.8" height="3" fill="#d4d4f0"/><path d="M4 10.4V13.4M6.6 10.4V13.4M9.2 10.4V13.4M11.6 10.4V13.4" stroke="#f2f2fc" stroke-width=".7"/><path d="M3 0.6V2.8M5 0.6V2.8M7 0.6V2.8M9 0.6V2.8M11 0.6V2.8M12.6 0.6V2.8" stroke="#444" stroke-width=".9"/><text x="7.6" y="9.6" font-family="Liberation Sans, sans-serif" font-weight="bold" font-size="7.5" text-anchor="middle" fill="#ff4a10">12</text></svg>
<div style="left:118px;top:280px;width:98px;height:23px;background:#fff;border:1px solid #7a7a7a;box-sizing:border-box;"></div>
<div style="left:166px;top:280px;width:1px;height:23px;background:#7a7a7a;"></div>
<svg style="left:196px;top:286px" width="14" height="14" viewBox="0 0 14 14"><defs><linearGradient id="lka" x1="0" y1="0" x2="1" y2="0"><stop offset="0" stop-color="#bcbcec"/><stop offset="1" stop-color="#8282c0"/></linearGradient></defs><rect x="1.2" y=".4" width="9.4" height="11.6" rx="1.5" fill="url(#lka)" stroke="#8080bc" stroke-width=".7"/><path d="M2 2.2H10M2 4.4H4.4M2 6.6H4M2 8.8H4.4" stroke="#e2e2f6" stroke-width=".8" opacity=".8"/><path d="M9.6 8.8L12.8 12" stroke="#f28a1c" stroke-width="2.3" stroke-linecap="round"/><path d="M11 10.2L11.8 11" stroke="#fff" stroke-width="2" opacity=".55"/><circle cx="7.2" cy="6.3" r="3.1" fill="#a6e0fc" stroke="#6a7088" stroke-width="1"/><circle cx="6.6" cy="5.6" r="1.2" fill="#fff" opacity=".5"/></svg>
<div style="left:118px;top:304px;width:98px;height:23px;background:#fff;border:1px solid #7a7a7a;box-sizing:border-box;"></div>
<div style="left:166px;top:304px;width:1px;height:23px;background:#7a7a7a;"></div>
<svg style="left:196px;top:310px" width="14" height="14" viewBox="0 0 14 14"><defs><linearGradient id="lka" x1="0" y1="0" x2="1" y2="0"><stop offset="0" stop-color="#bcbcec"/><stop offset="1" stop-color="#8282c0"/></linearGradient></defs><rect x="1.2" y=".4" width="9.4" height="11.6" rx="1.5" fill="url(#lka)" stroke="#8080bc" stroke-width=".7"/><path d="M2 2.2H10M2 4.4H4.4M2 6.6H4M2 8.8H4.4" stroke="#e2e2f6" stroke-width=".8" opacity=".8"/><path d="M9.6 8.8L12.8 12" stroke="#f28a1c" stroke-width="2.3" stroke-linecap="round"/><path d="M11 10.2L11.8 11" stroke="#fff" stroke-width="2" opacity=".55"/><circle cx="7.2" cy="6.3" r="3.1" fill="#a6e0fc" stroke="#6a7088" stroke-width="1"/><circle cx="6.6" cy="5.6" r="1.2" fill="#fff" opacity=".5"/></svg>
<div style="left:118px;top:328px;width:98px;height:23px;background:#fff;border:1px solid #7a7a7a;box-sizing:border-box;"></div>
<div style="left:166px;top:328px;width:1px;height:23px;background:#7a7a7a;"></div>
<svg style="left:196px;top:334px" width="14" height="14" viewBox="0 0 14 14"><defs><linearGradient id="lka" x1="0" y1="0" x2="1" y2="0"><stop offset="0" stop-color="#bcbcec"/><stop offset="1" stop-color="#8282c0"/></linearGradient></defs><rect x="1.2" y=".4" width="9.4" height="11.6" rx="1.5" fill="url(#lka)" stroke="#8080bc" stroke-width=".7"/><path d="M2 2.2H10M2 4.4H4.4M2 6.6H4M2 8.8H4.4" stroke="#e2e2f6" stroke-width=".8" opacity=".8"/><path d="M9.6 8.8L12.8 12" stroke="#f28a1c" stroke-width="2.3" stroke-linecap="round"/><path d="M11 10.2L11.8 11" stroke="#fff" stroke-width="2" opacity=".55"/><circle cx="7.2" cy="6.3" r="3.1" fill="#a6e0fc" stroke="#6a7088" stroke-width="1"/><circle cx="6.6" cy="5.6" r="1.2" fill="#fff" opacity=".5"/></svg>
<div style="left:118px;top:352px;width:109px;height:23px;background:#fff;border:1px solid #7a7a7a;box-sizing:border-box;"></div>
<svg style="left:208px;top:358px" width="14" height="14" viewBox="0 0 14 14"><defs><linearGradient id="lka" x1="0" y1="0" x2="1" y2="0"><stop offset="0" stop-color="#bcbcec"/><stop offset="1" stop-color="#8282c0"/></linearGradient></defs><rect x="1.2" y=".4" width="9.4" height="11.6" rx="1.5" fill="url(#lka)" stroke="#8080bc" stroke-width=".7"/><path d="M2 2.2H10M2 4.4H4.4M2 6.6H4M2 8.8H4.4" stroke="#e2e2f6" stroke-width=".8" opacity=".8"/><path d="M9.6 8.8L12.8 12" stroke="#f28a1c" stroke-width="2.3" stroke-linecap="round"/><path d="M11 10.2L11.8 11" stroke="#fff" stroke-width="2" opacity=".55"/><circle cx="7.2" cy="6.3" r="3.1" fill="#a6e0fc" stroke="#6a7088" stroke-width="1"/><circle cx="6.6" cy="5.6" r="1.2" fill="#fff" opacity=".5"/></svg>
<div style="left:118px;top:376px;width:109px;height:23px;background:#f0f0f0;border:1px solid #8c8c8c;box-sizing:border-box;"></div>
<div style="left:119px;top:377px;width:107px;height:21px;border:1px solid #fff;box-sizing:border-box;"></div>
<svg style="left:208px;top:382px" width="14" height="14" viewBox="0 0 14 14"><defs><linearGradient id="lkb" x1="0" y1="0" x2="1" y2="0"><stop offset="0" stop-color="#d0d0d0"/><stop offset="1" stop-color="#aeaeae"/></linearGradient></defs><rect x="1.2" y=".4" width="9.4" height="11.6" rx="1.5" fill="url(#lkb)" stroke="#a6a6a6" stroke-width=".7"/><path d="M2 2.2H10M2 4.4H4.4M2 6.6H4M2 8.8H4.4" stroke="#e2e2f6" stroke-width=".8" opacity=".8"/><path d="M9.6 8.8L12.8 12" stroke="#adadad" stroke-width="2.3" stroke-linecap="round"/><path d="M11 10.2L11.8 11" stroke="#fff" stroke-width="2" opacity=".55"/><circle cx="7.2" cy="6.3" r="3.1" fill="#e6e6e6" stroke="#8e8e8e" stroke-width="1"/><circle cx="6.6" cy="5.6" r="1.2" fill="#fff" opacity=".5"/></svg>
<div style="left:118px;top:400px;width:108px;height:23px;background:#fff;border:1px solid #7a7a7a;box-sizing:border-box;"></div>
<div style="left:190px;top:400px;width:1px;height:23px;background:#7a7a7a;"></div>
<svg style="left:207px;top:406px" width="14" height="14" viewBox="0 0 14 14"><defs><linearGradient id="lka" x1="0" y1="0" x2="1" y2="0"><stop offset="0" stop-color="#bcbcec"/><stop offset="1" stop-color="#8282c0"/></linearGradient></defs><rect x="1.2" y=".4" width="9.4" height="11.6" rx="1.5" fill="url(#lka)" stroke="#8080bc" stroke-width=".7"/><path d="M2 2.2H10M2 4.4H4.4M2 6.6H4M2 8.8H4.4" stroke="#e2e2f6" stroke-width=".8" opacity=".8"/><path d="M9.6 8.8L12.8 12" stroke="#f28a1c" stroke-width="2.3" stroke-linecap="round"/><path d="M11 10.2L11.8 11" stroke="#fff" stroke-width="2" opacity=".55"/><circle cx="7.2" cy="6.3" r="3.1" fill="#a6e0fc" stroke="#6a7088" stroke-width="1"/><circle cx="6.6" cy="5.6" r="1.2" fill="#fff" opacity=".5"/></svg>
<div style="left:118px;top:424px;width:108px;height:23px;background:#fff;border:1px solid #7a7a7a;box-sizing:border-box;"></div>
<div style="left:190px;top:424px;width:1px;height:23px;background:#7a7a7a;"></div>
<svg style="left:207px;top:430px" width="14" height="14" viewBox="0 0 14 14"><defs><linearGradient id="lka" x1="0" y1="0" x2="1" y2="0"><stop offset="0" stop-color="#bcbcec"/><stop offset="1" stop-color="#8282c0"/></linearGradient></defs><rect x="1.2" y=".4" width="9.4" height="11.6" rx="1.5" fill="url(#lka)" stroke="#8080bc" stroke-width=".7"/><path d="M2 2.2H10M2 4.4H4.4M2 6.6H4M2 8.8H4.4" stroke="#e2e2f6" stroke-width=".8" opacity=".8"/><path d="M9.6 8.8L12.8 12" stroke="#f28a1c" stroke-width="2.3" stroke-linecap="round"/><path d="M11 10.2L11.8 11" stroke="#fff" stroke-width="2" opacity=".55"/><circle cx="7.2" cy="6.3" r="3.1" fill="#a6e0fc" stroke="#6a7088" stroke-width="1"/><circle cx="6.6" cy="5.6" r="1.2" fill="#fff" opacity=".5"/></svg>
<div style="left:118px;top:448px;width:108px;height:23px;background:#fff;border:1px solid #7a7a7a;box-sizing:border-box;"></div>
<div style="left:190px;top:448px;width:1px;height:23px;background:#7a7a7a;"></div>
<svg style="left:207px;top:454px" width="14" height="14" viewBox="0 0 14 14"><defs><linearGradient id="lka" x1="0" y1="0" x2="1" y2="0"><stop offset="0" stop-color="#bcbcec"/><stop offset="1" stop-color="#8282c0"/></linearGradient></defs><rect x="1.2" y=".4" width="9.4" height="11.6" rx="1.5" fill="url(#lka)" stroke="#8080bc" stroke-width=".7"/><path d="M2 2.2H10M2 4.4H4.4M2 6.6H4M2 8.8H4.4" stroke="#e2e2f6" stroke-width=".8" opacity=".8"/><path d="M9.6 8.8L12.8 12" stroke="#f28a1c" stroke-width="2.3" stroke-linecap="round"/><path d="M11 10.2L11.8 11" stroke="#fff" stroke-width="2" opacity=".55"/><circle cx="7.2" cy="6.3" r="3.1" fill="#a6e0fc" stroke="#6a7088" stroke-width="1"/><circle cx="6.6" cy="5.6" r="1.2" fill="#fff" opacity=".5"/></svg>
<div style="left:334px;top:160px;width:97px;height:23px;background:#e1e1e1;border:1px solid #adadad;box-sizing:border-box;"></div>
<svg style="left:417px;top:169px" width="9" height="6" viewBox="0 0 9 6"><path d="M0.5 0.5L4.5 4.5L8.5 0.5" stroke="#444" stroke-width="1.05" fill="none"/></svg>
<div style="left:334px;top:184px;width:98px;height:23px;background:#fff;border:1px solid #7a7a7a;box-sizing:border-box;"></div>
<div style="left:382px;top:184px;width:1px;height:23px;background:#7a7a7a;"></div>
<svg style="left:412px;top:190px" width="14" height="14" viewBox="0 0 14 14"><defs><linearGradient id="lka" x1="0" y1="0" x2="1" y2="0"><stop offset="0" stop-color="#bcbcec"/><stop offset="1" stop-color="#8282c0"/></linearGradient></defs><rect x="1.2" y=".4" width="9.4" height="11.6" rx="1.5" fill="url(#lka)" stroke="#8080bc" stroke-width=".7"/><path d="M2 2.2H10M2 4.4H4.4M2 6.6H4M2 8.8H4.4" stroke="#e2e2f6" stroke-width=".8" opacity=".8"/><path d="M9.6 8.8L12.8 12" stroke="#f28a1c" stroke-width="2.3" stroke-linecap="round"/><path d="M11 10.2L11.8 11" stroke="#fff" stroke-width="2" opacity=".55"/><circle cx="7.2" cy="6.3" r="3.1" fill="#a6e0fc" stroke="#6a7088" stroke-width="1"/><circle cx="6.6" cy="5.6" r="1.2" fill="#fff" opacity=".5"/></svg>
<div style="left:334px;top:208px;width:97px;height:23px;background:#fff;border:1px solid #7a7a7a;box-sizing:border-box;"></div>
<div style="left:334px;top:232px;width:97px;height:23px;background:#fff;border:1px solid #7a7a7a;box-sizing:border-box;"></div>
<div style="left:334px;top:256px;width:97px;height:23px;background:#fff;border:1px solid #7a7a7a;box-sizing:border-box;"></div>
<svg style="left:411.3px;top:262px" width="14" height="14" viewBox="0 0 14 14"><defs><linearGradient id="lka" x1="0" y1="0" x2="1" y2="0"><stop offset="0" stop-color="#bcbcec"/><stop offset="1" stop-color="#8282c0"/></linearGradient></defs><rect x="1.2" y=".4" width="9.4" height="11.6" rx="1.5" fill="url(#lka)" stroke="#8080bc" stroke-width=".7"/><path d="M2 2.2H10M2 4.4H4.4M2 6.6H4M2 8.8H4.4" stroke="#e2e2f6" stroke-width=".8" opacity=".8"/><path d="M9.6 8.8L12.8 12" stroke="#f28a1c" stroke-width="2.3" stroke-linecap="round"/><path d="M11 10.2L11.8 11" stroke="#fff" stroke-width="2" opacity=".55"/><circle cx="7.2" cy="6.3" r="3.1" fill="#a6e0fc" stroke="#6a7088" stroke-width="1"/><circle cx="6.6" cy="5.6" r="1.2" fill="#fff" opacity=".5"/></svg>
<div style="left:334px;top:280px;width:98px;height:23px;background:#fff;border:1px solid #7a7a7a;box-sizing:border-box;"></div>
<div style="left:382px;top:280px;width:1px;height:23px;background:#7a7a7a;"></div>
<svg style="left:412px;top:286px" width="14" height="14" viewBox="0 0 14 14"><defs><linearGradient id="lka" x1="0" y1="0" x2="1" y2="0"><stop offset="0" stop-color="#bcbcec"/><stop offset="1" stop-color="#8282c0"/></linearGradient></defs><rect x="1.2" y=".4" width="9.4" height="11.6" rx="1.5" fill="url(#lka)" stroke="#8080bc" stroke-width=".7"/><path d="M2 2.2H10M2 4.4H4.4M2 6.6H4M2 8.8H4.4" stroke="#e2e2f6" stroke-width=".8" opacity=".8"/><path d="M9.6 8.8L12.8 12" stroke="#f28a1c" stroke-width="2.3" stroke-linecap="round"/><path d="M11 10.2L11.8 11" stroke="#fff" stroke-width="2" opacity=".55"/><circle cx="7.2" cy="6.3" r="3.1" fill="#a6e0fc" stroke="#6a7088" stroke-width="1"/><circle cx="6.6" cy="5.6" r="1.2" fill="#fff" opacity=".5"/></svg>
<div style="left:334px;top:304px;width:49px;height:23px;background:#fff;border:1px solid #7a7a7a;box-sizing:border-box;"></div>
<div style="left:332px;top:358px;width:132px;height:23px;background:#fff;border:1px solid #7a7a7a;box-sizing:border-box;"></div>
<div style="left:365px;top:385px;width:98px;height:23px;background:#fff;border:1px solid #7a7a7a;box-sizing:border-box;"></div>
<div style="left:427px;top:385px;width:1px;height:23px;background:#7a7a7a;"></div>
<svg style="left:444px;top:391px" width="14" height="14" viewBox="0 0 14 14"><defs><linearGradient id="lka" x1="0" y1="0" x2="1" y2="0"><stop offset="0" stop-color="#bcbcec"/><stop offset="1" stop-color="#8282c0"/></linearGradient></defs><rect x="1.2" y=".4" width="9.4" height="11.6" rx="1.5" fill="url(#lka)" stroke="#8080bc" stroke-width=".7"/><path d="M2 2.2H10M2 4.4H4.4M2 6.6H4M2 8.8H4.4" stroke="#e2e2f6" stroke-width=".8" opacity=".8"/><path d="M9.6 8.8L12.8 12" stroke="#f28a1c" stroke-width="2.3" stroke-linecap="round"/><path d="M11 10.2L11.8 11" stroke="#fff" stroke-width="2" opacity=".55"/><circle cx="7.2" cy="6.3" r="3.1" fill="#a6e0fc" stroke="#6a7088" stroke-width="1"/><circle cx="6.6" cy="5.6" r="1.2" fill="#fff" opacity=".5"/></svg>
<div style="left:365px;top:412px;width:98px;height:23px;background:#fff;border:1px solid #7a7a7a;box-sizing:border-box;"></div>
<div style="left:427px;top:412px;width:1px;height:23px;background:#7a7a7a;"></div>
<svg style="left:444px;top:418px" width="14" height="14" viewBox="0 0 14 14"><defs><linearGradient id="lka" x1="0" y1="0" x2="1" y2="0"><stop offset="0" stop-color="#bcbcec"/><stop offset="1" stop-color="#8282c0"/></linearGradient></defs><rect x="1.2" y=".4" width="9.4" height="11.6" rx="1.5" fill="url(#lka)" stroke="#8080bc" stroke-width=".7"/><path d="M2 2.2H10M2 4.4H4.4M2 6.6H4M2 8.8H4.4" stroke="#e2e2f6" stroke-width=".8" opacity=".8"/><path d="M9.6 8.8L12.8 12" stroke="#f28a1c" stroke-width="2.3" stroke-linecap="round"/><path d="M11 10.2L11.8 11" stroke="#fff" stroke-width="2" opacity=".55"/><circle cx="7.2" cy="6.3" r="3.1" fill="#a6e0fc" stroke="#6a7088" stroke-width="1"/><circle cx="6.6" cy="5.6" r="1.2" fill="#fff" opacity=".5"/></svg>
<div style="left:365px;top:439px;width:98px;height:23px;background:#fff;border:1px solid #7a7a7a;box-sizing:border-box;"></div>
<div style="left:464px;top:200px;width:306px;height:89px;background:#fff;border:1px solid #7a7a7a;box-sizing:border-box;"></div>
<div style="left:464px;top:297px;width:13px;height:13px;background:#fff;border:1px solid #333;box-sizing:border-box;"></div>
<div style="left:464px;top:320px;width:13px;height:13px;background:#fff;border:1px solid #333;box-sizing:border-box;"></div>
<div style="left:1px;top:477px;width:793px;height:1px;background:#a0a0a0;"></div>
<div style="left:1px;top:477px;width:1px;height:141px;background:#a0a0a0;"></div>
<div style="left:2px;top:478px;width:791px;height:139px;background:#fff;"></div>
<div style="left:793px;top:477px;width:1px;height:141px;background:#fff;"></div>
<div style="left:1px;top:617px;width:793px;height:1px;background:#fff;"></div>
<div style="left:0px;top:618px;width:795px;height:1px;background:#6e6e6e;"></div>
<div style="left:16px;top:480px;width:63px;height:18px;background:#e9e9e9;"></div>
<div style="left:14px;top:479px;width:1px;height:19px;background:#d9d9d9;"></div>
<div style="left:14px;top:498px;width:1px;height:101px;background:#eeeeee;"></div>
<div style="left:80px;top:479px;width:1px;height:19px;background:#d9d9d9;"></div>
<div style="left:80px;top:498px;width:1px;height:101px;background:#eeeeee;"></div>
<div style="left:146px;top:479px;width:1px;height:19px;background:#d9d9d9;"></div>
<div style="left:146px;top:498px;width:1px;height:101px;background:#eeeeee;"></div>
<div style="left:212px;top:479px;width:1px;height:19px;background:#d9d9d9;"></div>
<div style="left:212px;top:498px;width:1px;height:101px;background:#eeeeee;"></div>
<div style="left:278px;top:479px;width:1px;height:19px;background:#d9d9d9;"></div>
<div style="left:278px;top:498px;width:1px;height:101px;background:#eeeeee;"></div>
<div style="left:344px;top:479px;width:1px;height:19px;background:#d9d9d9;"></div>
<div style="left:344px;top:498px;width:1px;height:101px;background:#eeeeee;"></div>
<div style="left:555px;top:479px;width:1px;height:19px;background:#d9d9d9;"></div>
<div style="left:555px;top:498px;width:1px;height:101px;background:#eeeeee;"></div>
<div style="left:623px;top:479px;width:1px;height:19px;background:#d9d9d9;"></div>
<div style="left:623px;top:498px;width:1px;height:101px;background:#eeeeee;"></div>
<div style="left:689px;top:479px;width:1px;height:19px;background:#d9d9d9;"></div>
<div style="left:689px;top:498px;width:1px;height:101px;background:#eeeeee;"></div>
<div style="left:755px;top:479px;width:1px;height:19px;background:#d9d9d9;"></div>
<div style="left:755px;top:498px;width:1px;height:101px;background:#eeeeee;"></div>
<div style="left:2px;top:518px;width:775px;height:1px;background:#eeeeee;"></div>
<div style="left:2px;top:538px;width:775px;height:1px;background:#eeeeee;"></div>
<div style="left:2px;top:558px;width:775px;height:1px;background:#eeeeee;"></div>
<div style="left:2px;top:578px;width:775px;height:1px;background:#eeeeee;"></div>
<div style="left:2px;top:598px;width:775px;height:1px;background:#eeeeee;"></div>
<div style="left:2px;top:498px;width:775px;height:1px;background:#d9d9d9;"></div>
<div style="left:14px;top:498px;width:1px;height:101px;background:#dcdcdc;"></div>
<svg style="left:16px;top:482px" width="7" height="9" viewBox="0 0 7 9"><path d="M3.5 0V7.5M1 5L3.5 8L6 5" stroke="#1030ff" stroke-width="1.6" fill="none"/></svg>
<svg style="left:6px;top:583px" width="7" height="11" viewBox="0 0 7 11"><path d="M0 0L6.2 5.5L0 11Z" fill="#000"/></svg>
<div style="left:777px;top:479px;width:16px;height:120px;background:#f0f0f0;"></div>
<div style="left:2px;top:599px;width:791px;height:18px;background:#f0f0f0;"></div>
<div style="left:777px;top:531px;width:16px;height:17px;background:#cdcdcd;"></div>
<div style="left:20px;top:600px;width:17px;height:15px;background:#cdcdcd;"></div>
<svg style="left:780px;top:484px" width="9" height="8" viewBox="0 0 9 8"><path d="M0.9 6L4.5 2.2L8.1 6" stroke="#5e5e5e" stroke-width="2.1" fill="none"/></svg>
<svg style="left:780px;top:587px" width="9" height="8" viewBox="0 0 9 8"><path d="M0.9 1.4L4.5 5.2L8.1 1.4" stroke="#5e5e5e" stroke-width="2.1" fill="none"/></svg>
<svg style="left:7px;top:603px" width="8" height="9" viewBox="0 0 8 9"><path d="M6.2 0.9L2.4 4.5L6.2 8.1" stroke="#5e5e5e" stroke-width="2.1" fill="none"/></svg>
<svg style="left:764px;top:603px" width="8" height="9" viewBox="0 0 8 9"><path d="M1.4 0.9L5.2 4.5L1.4 8.1" stroke="#5e5e5e" stroke-width="2.1" fill="none"/></svg>
<span style="left:31.0px;top:8.84px;color:#fff;transform:scaleX(0.9481);">Trailer Profiles @ TM2022R [TMWIN - CD]</span>
<span style="left:8.4px;top:33.84px;color:#000;transform:scaleX(0.9307);">File</span>
<span style="left:40.0px;top:33.84px;color:#000;transform:scaleX(1.0633);">Multi-Company</span>
<span style="left:139.6px;top:33.84px;color:#000;transform:scaleX(0.9919);">Navigate</span>
<span style="left:200.0px;top:33.84px;color:#000;transform:scaleX(0.9798);">View</span>
<span style="left:239.5px;top:33.84px;color:#000;transform:scaleX(1.0113);">Window</span>
<span style="left:297.6px;top:33.84px;color:#000;transform:scaleX(0.9531);">Tools</span>
<span style="left:338.7px;top:33.84px;color:#000;transform:scaleX(0.9758);">Help</span>
<span style="left:569.0px;top:55.84px;color:#fff;transform:scaleX(1.0655);">All</span>
<span style="left:10.0px;top:77.84px;color:#000;transform:scaleX(0.9476);">Trailer Profile</span>
<span style="left:49.6px;top:100.84px;color:#000;transform:scaleX(0.9020);">Trailer ID</span>
<span style="left:100.7px;top:100.84px;color:#000;transform:scaleX(0.8927);">CHASSIS-04</span>
<span style="left:262.5px;top:100.84px;color:#000;transform:scaleX(0.9072);">Year</span>
<span style="left:362.5px;top:100.84px;color:#000;transform:scaleX(0.9030);">2018</span>
<span style="left:409.3px;top:100.84px;color:#000;transform:scaleX(0.9774);">Make</span>
<span style="left:444.2px;top:100.84px;color:#000;transform:scaleX(0.9160);">CHEETAH</span>
<span style="left:609.3px;top:101.84px;color:#000;transform:scaleX(1.0059);">Active</span>
<span style="left:13.4px;top:152.84px;color:#000;transform:scaleX(0.9449);">Basic Info</span>
<span style="left:88.6px;top:164.84px;color:#000;transform:scaleX(0.8865);">Class</span>
<span style="left:53.5px;top:188.84px;color:#000;transform:scaleX(0.9842);">Dimensions</span>
<span style="left:81.4px;top:212.84px;color:#000;transform:scaleX(1.0557);">Model</span>
<span style="left:40.0px;top:236.84px;color:#000;transform:scaleX(0.9805);">Serial Number</span>
<span style="left:41.24px;top:260.84px;color:#000;transform:scaleX(0.9601);">Insurance Exp</span>
<span style="left:58.4px;top:284.84px;color:#000;transform:scaleX(0.9734);">Max. Cube</span>
<span style="left:40.4px;top:308.84px;color:#000;transform:scaleX(0.9955);">Empty Weight</span>
<span style="left:48.6px;top:332.84px;color:#000;transform:scaleX(0.9920);">Max. Weight</span>
<span style="left:40.5px;top:356.84px;color:#000;transform:scaleX(0.9783);">Terminal Zone</span>
<span style="left:45.5px;top:380.84px;color:#000;transform:scaleX(0.9813);">Current Zone</span>
<span style="left:6.3px;top:404.84px;color:#000;transform:scaleX(0.9680);">King Pin Tare Weight</span>
<span style="left:48.9px;top:428.84px;color:#000;transform:scaleX(0.9844);">S Dimension</span>
<span style="left:19.9px;top:452.84px;color:#000;transform:scaleX(0.9968);">Turntable Position</span>
<span style="left:121.5px;top:163.84px;color:#000;transform:scaleX(0.8637);">CHASSIS</span>
<span style="left:169.5px;top:283.84px;color:#000;transform:scaleX(0.8310);">FT3</span>
<span style="left:157.4px;top:307.84px;color:#000;transform:scaleX(0.8571);">0</span>
<span style="left:169.5px;top:307.84px;color:#000;transform:scaleX(0.8314);">LB</span>
<span style="left:121.5px;top:379.84px;color:#000;transform:scaleX(0.8696);">75219</span>
<span style="left:308.0px;top:164.84px;color:#000;transform:scaleX(0.8845);">Type</span>
<span style="left:294.5px;top:188.84px;color:#000;transform:scaleX(1.0214);">Length</span>
<span style="left:303.5px;top:212.84px;color:#000;transform:scaleX(0.9474);">Axles</span>
<span style="left:305.6px;top:236.84px;color:#000;transform:scaleX(0.9285);">Plate</span>
<span style="left:280.0px;top:260.84px;color:#000;transform:scaleX(0.9211);">Size Code</span>
<span style="left:258.7px;top:284.84px;color:#000;transform:scaleX(0.9835);">Cargo Weight</span>
<span style="left:268.5px;top:308.84px;color:#000;transform:scaleX(0.9609);">Max. Pallets</span>
<span style="left:338.8px;top:164.84px;color:#000;transform:scaleX(0.9068);">Chassis</span>
<span style="left:385.5px;top:187.84px;color:#000;transform:scaleX(0.7632);">FT</span>
<span style="left:421.3px;top:211.84px;color:#000;transform:scaleX(0.8429);">0</span>
<span style="left:373.4px;top:283.84px;color:#000;transform:scaleX(0.8571);">0</span>
<span style="left:385.5px;top:283.84px;color:#000;transform:scaleX(0.8314);">LB</span>
<span style="left:373.4px;top:307.84px;color:#000;transform:scaleX(0.8571);">0</span>
<span style="left:332.5px;top:340.84px;color:#000;transform:scaleX(0.8777);">Test</span>
<span style="left:238.2px;top:357.84px;color:#000;transform:scaleX(0.9805);">Paired Container</span>
<span style="left:238.2px;top:389.84px;color:#000;transform:scaleX(0.9676);">Axle Group Tare Weight</span>
<span style="left:284.2px;top:416.84px;color:#000;transform:scaleX(0.9549);">Rear Overhang</span>
<span style="left:258.2px;top:443.84px;color:#000;transform:scaleX(0.9778);">Axle Group Spacing</span>
<span style="left:464.3px;top:182.84px;color:#000;transform:scaleX(1.0110);">Description</span>
<span style="left:480.3px;top:296.84px;color:#000;transform:scaleX(0.9974);">Pintle Hook</span>
<span style="left:480.3px;top:319.84px;color:#000;transform:scaleX(0.9270);">Tail Gate</span>
<span style="left:24.0px;top:481.84px;color:#000;transform:scaleX(0.9326);">Trailer</span>
<span style="left:83.8px;top:481.84px;color:#000;transform:scaleX(0.9471);">Make</span>
<span style="left:149.5px;top:481.84px;color:#000;transform:scaleX(0.9485);">Year</span>
<span style="left:215.3px;top:481.84px;color:#000;transform:scaleX(0.9791);">Zone</span>
<span style="left:281.7px;top:481.84px;color:#000;transform:scaleX(0.9377);">Status</span>
<span style="left:347.6px;top:481.84px;color:#000;transform:scaleX(0.9851);">Next Maintenance</span>
<span style="left:557.6px;top:481.84px;color:#000;transform:scaleX(0.9766);">Current Trip</span>
<span style="left:626.8px;top:481.84px;color:#000;transform:scaleX(0.9909);">Length</span>
<span style="left:693.4px;top:481.84px;color:#000;transform:scaleX(0.8565);">Class</span>
<span style="left:758.8px;top:481.84px;color:#000;transform:scaleX(0.8735);">Las</span>
<span style="left:18.5px;top:501.84px;color:#000;transform:scaleX(0.9244);">CH0008</span>
<span style="left:84.3px;top:501.84px;color:#000;transform:scaleX(0.9178);">CHEETAH</span>
<span style="left:185.5px;top:501.84px;color:#000;transform:scaleX(0.8364);">2018</span>
<span style="left:216.5px;top:501.84px;color:#000;transform:scaleX(0.8842);">BCTERM</span>
<span style="left:281.7px;top:501.84px;color:#000;transform:scaleX(1.0042);">AVAIL</span>
<span style="left:614.2px;top:501.84px;color:#000;transform:scaleX(0.8286);">0</span>
<span style="left:693.4px;top:501.84px;color:#000;transform:scaleX(0.8637);">CHASSIS</span>
<span style="left:18.5px;top:521.84px;color:#000;transform:scaleX(0.8813);">CHASSIS-01</span>
<span style="left:84.3px;top:521.84px;color:#000;transform:scaleX(0.9178);">CHEETAH</span>
<span style="left:185.5px;top:521.84px;color:#000;transform:scaleX(0.8364);">2018</span>
<span style="left:216.5px;top:521.84px;color:#000;transform:scaleX(0.8567);">V6B 6G1</span>
<span style="left:281.7px;top:521.84px;color:#000;transform:scaleX(1.0042);">AVAIL</span>
<span style="left:614.2px;top:521.84px;color:#000;transform:scaleX(0.8286);">0</span>
<span style="left:693.4px;top:521.84px;color:#000;transform:scaleX(0.8637);">CHASSIS</span>
<span style="left:18.5px;top:541.84px;color:#000;transform:scaleX(0.8813);">CHASSIS-02</span>
<span style="left:84.3px;top:541.84px;color:#000;transform:scaleX(0.9178);">CHEETAH</span>
<span style="left:185.5px;top:541.84px;color:#000;transform:scaleX(0.8364);">2018</span>
<span style="left:216.5px;top:541.84px;color:#000;transform:scaleX(0.8755);">07102</span>
<span style="left:281.7px;top:541.84px;color:#000;transform:scaleX(1.0042);">AVAIL</span>
<span style="left:614.2px;top:541.84px;color:#000;transform:scaleX(0.8286);">0</span>
<span style="left:693.4px;top:541.84px;color:#000;transform:scaleX(0.8637);">CHASSIS</span>
<span style="left:18.5px;top:561.84px;color:#000;transform:scaleX(0.8813);">CHASSIS-03</span>
<span style="left:84.3px;top:561.84px;color:#000;transform:scaleX(0.9178);">CHEETAH</span>
<span style="left:185.5px;top:561.84px;color:#000;transform:scaleX(0.8364);">2018</span>
<span style="left:216.5px;top:561.84px;color:#000;transform:scaleX(0.8755);">33602</span>
<span style="left:281.7px;top:561.84px;color:#000;transform:scaleX(1.0042);">AVAIL</span>
<span style="left:614.2px;top:561.84px;color:#000;transform:scaleX(0.8286);">0</span>
<span style="left:693.4px;top:561.84px;color:#000;transform:scaleX(0.8637);">CHASSIS</span>
<span style="left:18.5px;top:581.84px;color:#000;transform:scaleX(0.8813);">CHASSIS-04</span>
<span style="left:84.3px;top:581.84px;color:#000;transform:scaleX(0.9178);">CHEETAH</span>
<span style="left:185.5px;top:581.84px;color:#000;transform:scaleX(0.8364);">2018</span>
<span style="left:216.5px;top:581.84px;color:#000;transform:scaleX(0.8755);">75219</span>
<span style="left:281.7px;top:581.84px;color:#000;transform:scaleX(1.0042);">AVAIL</span>
<span style="left:614.2px;top:581.84px;color:#000;transform:scaleX(0.8286);">0</span>
<span style="left:693.4px;top:581.84px;color:#000;transform:scaleX(0.8637);">CHASSIS</span>
</div></body></html>
